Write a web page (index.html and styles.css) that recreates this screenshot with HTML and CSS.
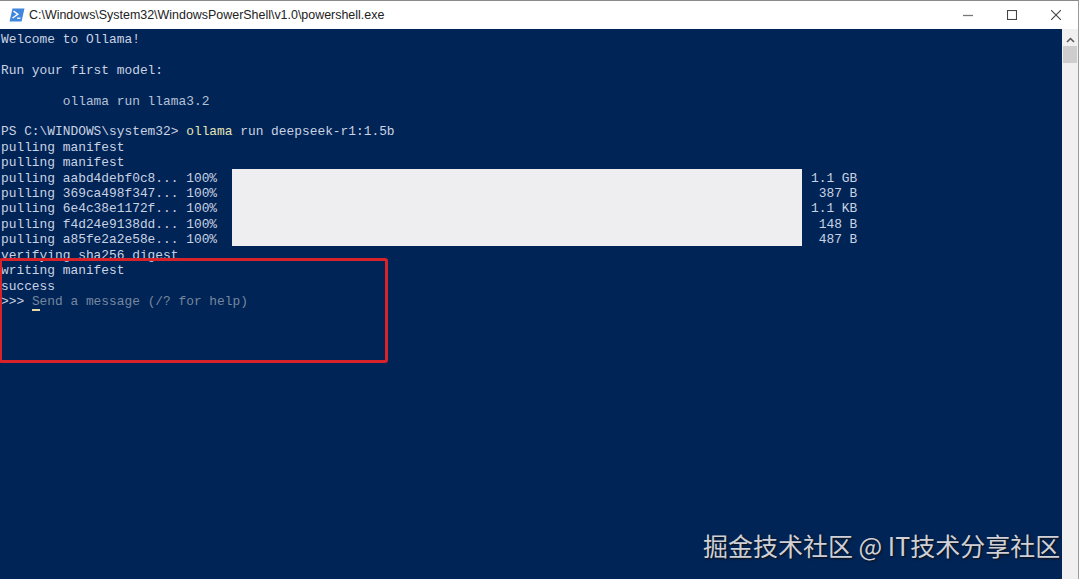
FILE: index.html
```html
<!DOCTYPE html>
<html lang="zh">
<head>
<meta charset="utf-8">
<title>powershell.exe</title>
<link rel="stylesheet" href="styles.css">
</head>
<body>
<div class="window">
  <header class="titlebar">
    <svg class="app-icon" width="16" height="14" viewBox="0 0 16 14">
      <path d="M3.5 0.5H15.5L12.5 13.5H0.5Z" fill="#3f86dc"/>
      <path d="M4.5 3L8.8 6.3L3.5 10" fill="none" stroke="#fff" stroke-width="1.5"/>
      <path d="M8 10.2H11.5" stroke="#fff" stroke-width="1.3"/>
    </svg>
    <span class="title">C:\Windows\System32\WindowsPowerShell\v1.0\powershell.exe</span>
    <div class="controls">
      <svg width="10" height="10" viewBox="0 0 10 10"><path d="M0 5.5H10" stroke="#777" stroke-width="1.3"/></svg>
      <svg width="10" height="10" viewBox="0 0 10 10"><rect x="0.5" y="0.5" width="9" height="9" fill="none" stroke="#444" stroke-width="1.1"/></svg>
      <svg width="10" height="10" viewBox="0 0 10 10"><path d="M0 0L10 10M10 0L0 10" stroke="#444" stroke-width="1.1"/></svg>
    </div>
  </header>
  <div class="client">
    <main class="console">
      <div class="line">Welcome to Ollama!</div>
      <div class="line"></div>
      <div class="line">Run your first model:</div>
      <div class="line"></div>
      <div class="line dim">        ollama run llama3.2</div>
      <div class="line"></div>
      <div class="line">PS C:\WINDOWS\system32&gt; <span class="cmd">ollama</span> run deepseek-r1:1.5b</div>
      <div class="line">pulling manifest</div>
      <div class="line">pulling manifest</div>
      <div class="progress">
        <div class="names">
          <div class="line">pulling aabd4debf0c8... 100%</div>
          <div class="line">pulling 369ca498f347... 100%</div>
          <div class="line">pulling 6e4c38e1172f... 100%</div>
          <div class="line">pulling f4d24e9138dd... 100%</div>
          <div class="line">pulling a85fe2a2e58e... 100%</div>
        </div>
        <div class="redaction"></div>
        <div class="sizes">
          <div class="line">1.1 GB</div>
          <div class="line"> 387 B</div>
          <div class="line">1.1 KB</div>
          <div class="line"> 148 B</div>
          <div class="line"> 487 B</div>
        </div>
      </div>
      <div class="line">verifying sha256 digest</div>
      <div class="line">writing manifest</div>
      <div class="line">success</div>
      <div class="line">&gt;&gt;&gt; <span class="hint"><span class="cursor">S</span>end a message (/? for help)</span></div>
    </main>
    <aside class="scrollbar">
      <svg class="arrow" width="9" height="6" viewBox="0 0 9 6"><path d="M1 5L4.5 1.5L8 5" fill="none" stroke="#555" stroke-width="1.5"/></svg>
      <div class="thumb"></div>
    </aside>
  </div>
  <div class="annotation"></div>
  <div class="watermark">掘金技术社区 @ IT技术分享社区</div>
</div>
</body>
</html>
```
FILE: styles.css
```css
* { box-sizing: border-box; }
html, body { margin: 0; padding: 0; height: 100%; overflow: hidden; }
body { background: #fff; }
.window {
  position: relative;
  width: 1079px;
  height: 579px;
  display: flex;
  flex-direction: column;
  border-top: 1px solid #8a8a8a;
  border-right: 1px solid #9a9a9a;
}
.titlebar {
  height: 28px;
  flex: none;
  display: flex;
  align-items: center;
  background: #fff;
  padding-left: 9px;
}
.app-icon { flex: none; }
.title {
  margin-left: 4px;
  font: 12.44px "Liberation Sans", sans-serif;
  color: #222;
  white-space: nowrap;
}
.controls {
  margin-left: auto;
  display: flex;
  gap: 34px;
  padding-right: 17px;
}
.client { flex: 1; display: flex; min-height: 0; }
.console {
  width: 1062px;
  flex: none;
  background: #012456;
  padding: 3px 0 0 1px;
  color: #c9d3e3;
  font: 12.87px/15.42px "Liberation Mono", monospace;
  overflow: hidden;
}
.line { height: 15.42px; white-space: pre; }
.dim { color: #b4c2d8; }
.cmd { color: #e4e6b8; }
.hint { color: #76879f; }
.cursor { border-bottom: 2px solid #e6d9a8; }
.progress { display: flex; }
.names { width: 231px; flex: none; }
.redaction { width: 570px; flex: none; height: 77px; margin-top: -2px; background: #eeeef1; }
.sizes { margin-left: 9px; }
.scrollbar {
  width: 16px;
  flex: none;
  background: #f0f0f0;
  display: flex;
  flex-direction: column;
  align-items: center;
  padding-top: 8px;
}
.arrow { flex: none; }
.thumb { width: 14px; height: 17px; margin-top: 3px; background: #cdcdcd; }
.annotation {
  position: absolute;
  left: -1px;
  top: 257px;
  width: 389px;
  height: 105px;
  border: 3px solid #d8232a;
  border-radius: 3px;
}
.watermark {
  position: absolute;
  left: 703px;
  top: 527px;
  font: 25px/34px "Noto Sans CJK SC", sans-serif;
  color: #cfd0d8;
  text-shadow: 1px 1px 2px #111;
  white-space: nowrap;
}
```
